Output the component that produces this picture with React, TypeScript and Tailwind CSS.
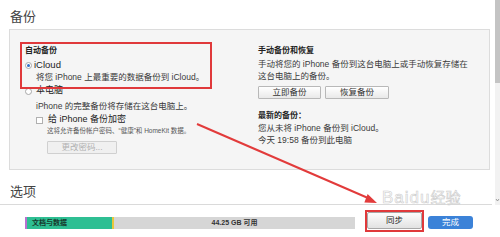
import React from 'react';

const font = { fontFamily: '"Liberation Sans", "Noto Sans CJK SC", sans-serif' };

const Radio = ({ checked }: { checked?: boolean }) => (
  <span className="flex h-[7px] w-[7px] items-center justify-center rounded-full border border-[#a8a8a8] bg-white">
    {checked && <span className="h-[3px] w-[3px] rounded-full bg-[#2f6fc9]" />}
  </span>
);

const SmallButton = ({ label, width, disabled }: { label: string; width: string; disabled?: boolean }) => (
  <div
    className={`flex h-[13px] items-center justify-center rounded-[1px] border text-[8.5px] leading-none ${width} ${
      disabled
        ? 'border-[#d0d0d0] bg-[#f0f0f0] text-[#b0b0b0]'
        : 'border-[#b8b8b8] bg-gradient-to-b from-white to-[#e9e9e9] text-[#333]'
    }`}
  >
    {label}
  </div>
);

const App: React.FC = () => {
  return (
    <div className="relative h-[237px] w-[500px] overflow-hidden bg-white" style={font}>
      {/* 滚动区域 */}
      <div className="flex h-[205px]">
        <div className="w-[495px]">
          <div className="pl-[10px] pt-[9px] text-[13px] leading-[16px] text-[#444]">备份</div>

          <div className="ml-[9px] mt-[4px] flex h-[141px] w-[481px] border border-[#dcdcdc] bg-[#f5f5f5] pl-[15px] pt-[16px] text-[#3a3a3a]">
            {/* 左列 */}
            <div className="w-[232px]">
              <div className="text-[8px] font-bold leading-[10px] text-[#222]">自动备份</div>
              <div className="mt-[4px] flex h-[10px] items-center gap-[2px] text-[9.5px] text-[#222]">
                <Radio checked />
                <span>iCloud</span>
              </div>
              <div className="mt-[1px] whitespace-nowrap pl-[11px] text-[8.5px] leading-[12px]">
                将您 iPhone 上最重要的数据备份到 iCloud。
              </div>
              <div className="mt-[2px] flex h-[12px] items-center gap-[4px] text-[9px] text-[#222]">
                <Radio />
                <span>本电脑</span>
              </div>
              <div className="mt-[3px] whitespace-nowrap pl-[11px] text-[8.5px] leading-[12px]">
                iPhone 的完整备份将存储在这台电脑上。
              </div>
              <div className="mt-[2px] flex h-[12px] items-center gap-[5px] pl-[11px] text-[9px] text-[#222]">
                <span className="h-[7px] w-[7px] border border-[#b0b0b0] bg-white" />
                <span>给 iPhone 备份加密</span>
              </div>
              <div className="whitespace-nowrap pl-[22px] text-[6.5px] leading-[10px] text-[#555]">
                这将允许备份帐户密码、“健康”和 HomeKit 数据。
              </div>
              <div className="ml-[22px] mt-[5px]">
                <SmallButton label="更改密码..." width="w-[70px]" disabled />
              </div>
            </div>

            {/* 右列 */}
            <div className="pl-[1px]">
              <div className="text-[8px] font-bold leading-[10px] text-[#222]">手动备份和恢复</div>
              <div className="mt-[2px] whitespace-nowrap text-[8.5px] leading-[12px]">
                手动将您的 iPhone 备份到这台电脑上或手动恢复存储在
                <br />
                这台电脑上的备份。
              </div>
              <div className="mt-[4px] flex gap-[4px]">
                <SmallButton label="立即备份" width="w-[63px]" />
                <SmallButton label="恢复备份" width="w-[64px]" />
              </div>
              <div className="mt-[12px] text-[8px] font-bold leading-[10px] text-[#222]">最新的备份：</div>
              <div className="mt-[1px] whitespace-nowrap text-[8.5px] leading-[12px]">
                您从未将 iPhone 备份到 iCloud。
                <br />
                今天 19:58 备份到此电脑
              </div>
            </div>
          </div>

          <div className="pl-[10px] pt-[14px] text-[13px] leading-[16px] text-[#444]">选项</div>
          <div className="mt-[4px] h-px w-[492px] bg-[#dadada]" />
        </div>

        {/* 滚动条 */}
        <div className="flex w-[5px] flex-col bg-[#f2f2f2]">
          <div className="h-[83px] bg-[#c4c4c4]" />
          <div className="flex-1" />
          <svg width="5" height="6" viewBox="0 0 5 6" className="mb-[2px]">
            <path d="M1 2 L2.5 4 L4 2" fill="none" stroke="#888" strokeWidth="0.8" />
          </svg>
        </div>
      </div>

      {/* 底部容量条 */}
      <div className="flex h-[32px] items-start">
        <div className="ml-[25px] mt-[12px] flex h-[12px] w-[330px] text-[7px] font-bold leading-[12px]">
          <div className="w-[2px] bg-[#b86fd0]" />
          <div className="w-[85px] bg-[#2ebf93] pl-[5px] text-[#17382c]">文档与数据</div>
          <div className="w-[2px] bg-[#e8c83c]" />
          <div className="flex flex-1 justify-center bg-[#d6d6d6] text-[#333]">44.25 GB 可用</div>
        </div>
        <div className="ml-[12px] mt-[7px] flex h-[17px] w-[55px] items-center justify-center rounded-[2px] border border-[#a8a8a8] bg-gradient-to-b from-[#fdfdfd] to-[#e2e2e2] text-[8.5px] text-[#222]">
          同步
        </div>
        <div className="ml-[6px] mt-[11px] flex h-[13px] w-[45px] items-center justify-center rounded-[3px] bg-[#3b82d8] text-[8.5px] text-white">
          完成
        </div>
      </div>

      {/* 标注 */}
      <div className="pointer-events-none absolute left-[20px] top-[42px] h-[47px] w-[192px] border-2 border-[#e0393b]" />
      <div className="pointer-events-none absolute left-[365px] top-[210px] h-[22px] w-[59px] border-2 border-[#e0393b]" />
      <svg className="pointer-events-none absolute left-0 top-0" width="500" height="237">
        <line x1="197" y1="124" x2="368" y2="198" stroke="#e23b3b" strokeWidth="2" />
        <polygon points="377,203 367.6,194 364.4,202.4" fill="#e23b3b" />
      </svg>

      {/* 水印 */}
      <div className="pointer-events-none absolute left-[382px] top-[189px] flex items-end whitespace-nowrap text-[17px] leading-[18px] text-white/70 [-webkit-text-stroke:0.6px_#cdcdcd]">
        <span className="tracking-[1px]">Baidu</span>
        <span className="text-[15px]">经验</span>
      </div>
    </div>
  );
};

export default App;
